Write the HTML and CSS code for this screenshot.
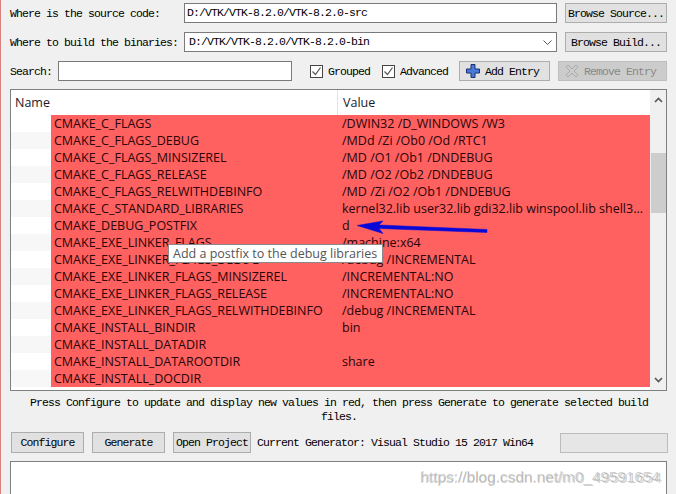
FILE: index.html
```html
<!DOCTYPE html>
<html lang="en">
<head>
    <meta charset="UTF-8">
    <title>CMake</title>
    <link rel="stylesheet" href="styles.css">
</head>
<body>
    <div class="window">
        <!-- Paths -->
        <div class="path-row">
            <span class="path-label">Where is the source code:</span>
            <div class="field path-field">D:/VTK/VTK-8.2.0/VTK-8.2.0-src</div>
            <button class="btn browse">Browse Source...</button>
        </div>
        <div class="path-row">
            <span class="path-label">Where to build the binaries:</span>
            <div class="field path-field combo">
                D:/VTK/VTK-8.2.0/VTK-8.2.0-bin
                <svg class="chevron" width="9" height="5" viewBox="0 0 9 5"><path d="M.5.5l4 4 4-4" fill="none" stroke="#555"/></svg>
            </div>
            <button class="btn browse">Browse Build...</button>
        </div>

        <!-- Search and options -->
        <div class="search-row">
            <span>Search:</span>
            <div class="field search-field"></div>
            <label class="check"><svg width="13" height="13" viewBox="0 0 13 13"><rect x=".5" y=".5" width="12" height="12" fill="#fff" stroke="#444"/><path d="M2.5 6.5l3 3 5-7" fill="none" stroke="#555" stroke-width="1.2"/></svg>Grouped</label>
            <label class="check"><svg width="13" height="13" viewBox="0 0 13 13"><rect x=".5" y=".5" width="12" height="12" fill="#fff" stroke="#444"/><path d="M2.5 6.5l3 3 5-7" fill="none" stroke="#555" stroke-width="1.2"/></svg>Advanced</label>
            <button class="btn entry">
                <svg width="14" height="14" viewBox="0 0 14 14"><path d="M5 .5h4v4.500h4.500v4H9v4.500H5V9H.5V5H5z" fill="#4a78d8" stroke="#1a2f70"/></svg>
                Add Entry
            </button>
            <button class="btn entry disabled">
                <svg width="14" height="14" viewBox="0 0 14 14"><path d="M3 1l4 4 4-4 2 2-4 4 4 4-2 2-4-4-4 4-2-2 4-4-4-4z" fill="#ccc" stroke="#aaa"/></svg>
                Remove Entry
            </button>
        </div>

        <!-- Cache table -->
        <div class="table">
            <div class="table-main">
                <div class="table-head">
                    <div class="head-name">Name</div>
                    <div class="head-value">Value</div>
                </div>
                <div class="row"><div class="cell"><span class="name">CMAKE_C_FLAGS</span><span class="value">/DWIN32 /D_WINDOWS /W3</span></div></div>
                <div class="row"><div class="cell"><span class="name">CMAKE_C_FLAGS_DEBUG</span><span class="value">/MDd /Zi /Ob0 /Od /RTC1</span></div></div>
                <div class="row"><div class="cell"><span class="name">CMAKE_C_FLAGS_MINSIZEREL</span><span class="value">/MD /O1 /Ob1 /DNDEBUG</span></div></div>
                <div class="row"><div class="cell"><span class="name">CMAKE_C_FLAGS_RELEASE</span><span class="value">/MD /O2 /Ob2 /DNDEBUG</span></div></div>
                <div class="row"><div class="cell"><span class="name">CMAKE_C_FLAGS_RELWITHDEBINFO</span><span class="value">/MD /Zi /O2 /Ob1 /DNDEBUG</span></div></div>
                <div class="row"><div class="cell"><span class="name">CMAKE_C_STANDARD_LIBRARIES</span><span class="value">kernel32.lib user32.lib gdi32.lib winspool.lib shell3...</span></div></div>
                <div class="row"><div class="cell"><span class="name">CMAKE_DEBUG_POSTFIX</span><span class="value">d</span></div></div>
                <div class="row"><div class="cell"><span class="name">CMAKE_EXE_LINKER_FLAGS</span><span class="value">/machine:x64</span></div></div>
                <div class="row"><div class="cell"><span class="name">CMAKE_EXE_LINKER_FLAGS_DEBUG</span><span class="value">/debug /INCREMENTAL</span></div></div>
                <div class="row"><div class="cell"><span class="name">CMAKE_EXE_LINKER_FLAGS_MINSIZEREL</span><span class="value">/INCREMENTAL:NO</span></div></div>
                <div class="row"><div class="cell"><span class="name">CMAKE_EXE_LINKER_FLAGS_RELEASE</span><span class="value">/INCREMENTAL:NO</span></div></div>
                <div class="row"><div class="cell"><span class="name">CMAKE_EXE_LINKER_FLAGS_RELWITHDEBINFO</span><span class="value">/debug /INCREMENTAL</span></div></div>
                <div class="row"><div class="cell"><span class="name">CMAKE_INSTALL_BINDIR</span><span class="value">bin</span></div></div>
                <div class="row"><div class="cell"><span class="name">CMAKE_INSTALL_DATADIR</span><span class="value"></span></div></div>
                <div class="row"><div class="cell"><span class="name">CMAKE_INSTALL_DATAROOTDIR</span><span class="value">share</span></div></div>
                <div class="row"><div class="cell"><span class="name">CMAKE_INSTALL_DOCDIR</span><span class="value"></span></div></div>
            </div>
            <div class="scrollbar">
                <svg width="9" height="6" viewBox="0 0 9 6"><path d="M1 5l3.500-3.500L8 5" fill="none" stroke="#555" stroke-width="1.600"/></svg>
                <div class="thumb"></div>
                <svg width="9" height="6" viewBox="0 0 9 6"><path d="M1 1l3.500 3.500L8 1" fill="none" stroke="#555" stroke-width="1.600"/></svg>
            </div>
        </div>

        <p class="message">Press Configure to update and display new values in red, then press Generate to generate selected build files.</p>

        <!-- Actions -->
        <div class="action-row">
            <button class="btn action">Configure</button>
            <button class="btn action">Generate</button>
            <button class="btn action open">Open Project</button>
            <span class="generator">Current Generator: Visual Studio 15 2017 Win64</span>
            <div class="progress"></div>
        </div>

        <div class="log"></div>
    </div>

    <!-- Overlays -->
    <div class="tooltip">Add a postfix to the debug libraries</div>
    <svg class="arrow" width="134" height="16" viewBox="0 0 134 16">
        <path d="M1 5.500L27 1l-4 4 108 4.500v3L23 8.500l4 5z" fill="#0808d8" stroke="#0808d8" stroke-width=".5"/>
    </svg>
    <div class="watermark">https://blog.csdn.net/m0_49591654</div>
    <div class="watermark second">https://blog.csdn.net/m0_49591654</div>
</body>
</html>
```

FILE: styles.css
```css
html, body {
    margin: 0;
    padding: 0;
}

body {
    width: 676px;
    height: 494px;
    overflow: hidden;
    background: #f0f0f0;
    font-family: "Liberation Mono", monospace;
    font-size: 11.5px;
    letter-spacing: -0.9px;
    color: #000;
    position: relative;
}

.window {
    box-sizing: border-box;
    height: 494px;
    padding: 3px 8px 0 9px;
    border-left: 1px solid #d98080;
}

.path-row {
    display: flex;
    align-items: center;
    height: 20px;
    margin-bottom: 9px;
}

.path-label {
    width: 174px;
    flex: none;
}

.field {
    box-sizing: border-box;
    background: white;
    border: 1px solid #7a7a7a;
    height: 20px;
    line-height: 18px;
    padding: 0 2px;
}

.path-field {
    width: 373px;
    flex: none;
    position: relative;
}

.combo {
    padding-left: 4px;
}

.chevron {
    position: absolute;
    right: 4px;
    top: 7px;
}

.btn {
    box-sizing: border-box;
    height: 20px;
    padding: 0;
    background: #e1e1e1;
    border: 1px solid #adadad;
    font: inherit;
    letter-spacing: inherit;
    color: #000;
}

.browse {
    width: 102px;
    margin-left: 8px;
    flex: none;
}

.search-row {
    display: flex;
    align-items: center;
    height: 20px;
}

.search-field {
    width: 234px;
    margin-left: 6px;
    flex: none;
}

.check {
    display: flex;
    align-items: center;
    gap: 5px;
    margin-left: 18px;
}

.check + .check {
    margin-left: 12px;
}

.entry {
    display: flex;
    align-items: center;
    gap: 5px;
    width: 91px;
    padding-left: 6px;
    margin-left: 11px;
    flex: none;
}

.entry.disabled {
    width: 109px;
    margin-left: 8px;
    color: #888;
    background: #ccc;
    border-color: #bfbfbf;
}

.table {
    box-sizing: border-box;
    display: flex;
    width: 657px;
    height: 302px;
    margin-top: 8px;
    border: 1px solid #7f7f7f;
    background: white;
    font-family: "Open Sans", sans-serif;
    font-size: 12.5px;
    letter-spacing: 0;
}

.table-main {
    width: 639px;
    overflow: hidden;
}

.table-head {
    display: flex;
    height: 25px;
    line-height: 25px;
    color: #1a1a2a;
}

.head-name {
    width: 322px;
    padding-left: 4px;
    border-right: 1px solid #e4e4e4;
}

.head-value {
    padding-left: 5px;
}

.row {
    height: 17px;
    padding-left: 40px;
}

.row:nth-child(odd) {
    background: #f7f7f7;
}

.cell {
    display: flex;
    height: 17px;
    line-height: 17px;
    background: #ff6060;
    color: #2a0606;
    white-space: nowrap;
}

.name {
    width: 288px;
    padding-left: 3px;
    flex: none;
}

.value {
    flex: 1;
}

.scrollbar {
    flex: 1;
    display: flex;
    flex-direction: column;
    align-items: center;
    background: #f0f0f0;
    padding-top: 7px;
}

.thumb {
    width: 15px;
    height: 60px;
    margin-top: 50px;
    margin-bottom: 164px;
    background: #cdcdcd;
}

.message {
    width: 620px;
    margin: 5px auto 0;
    text-align: center;
    line-height: 14px;
    height: 28px;
}

.action-row {
    display: flex;
    align-items: center;
    height: 21px;
    margin-top: 8px;
    margin-left: 1px;
}

.action {
    width: 73px;
    height: 21px;
    margin-right: 8px;
}

.open {
    width: 78px;
    margin-right: 6px;
}

.generator {
    white-space: nowrap;
}

.progress {
    box-sizing: border-box;
    width: 108px;
    height: 20px;
    margin-left: auto;
    background: #e6e6e6;
    border: 1px solid #bcbcbc;
}

.log {
    box-sizing: border-box;
    width: 657px;
    height: 40px;
    margin-top: 8px;
    background: white;
    border: 1px solid #7f7f7f;
}

.tooltip {
    position: absolute;
    left: 168px;
    top: 244px;
    box-sizing: border-box;
    width: 215px;
    height: 19px;
    line-height: 17px;
    padding-left: 4px;
    background: white;
    border: 1px solid #8a8a8a;
    font-family: "Open Sans", sans-serif;
    font-size: 12.5px;
    letter-spacing: 0;
    color: #555;
    white-space: nowrap;
}

.arrow {
    position: absolute;
    left: 356px;
    top: 220px;
}

.watermark {
    position: absolute;
    left: 420px;
    top: 469px;
    font-family: "Liberation Sans", sans-serif;
    font-size: 15.5px;
    letter-spacing: 0;
    color: rgba(150, 150, 150, 0.45);
    white-space: nowrap;
}

.second {
    top: 468px;
    left: 421px;
    letter-spacing: -0.1px;
}
```
